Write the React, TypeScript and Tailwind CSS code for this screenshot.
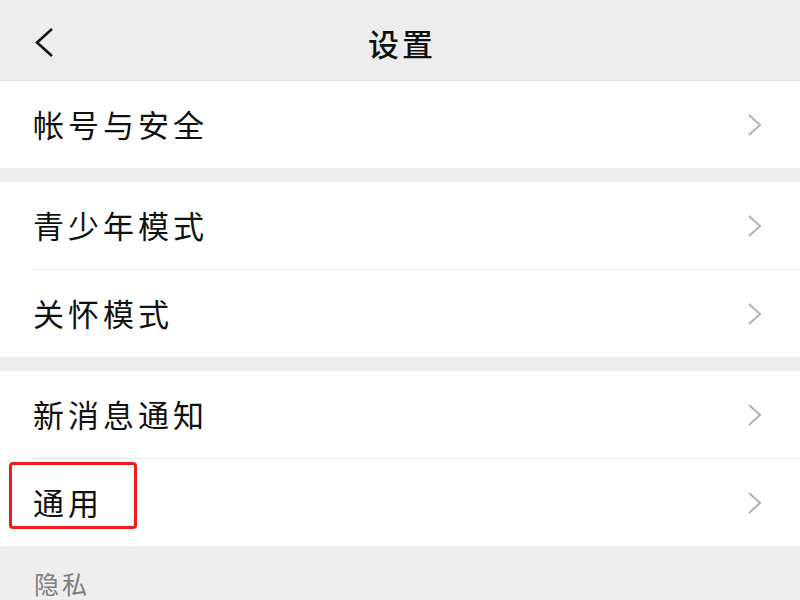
import React from 'react'

const font = { fontFamily: '"Noto Sans CJK SC", "Noto Sans", sans-serif' }

function Chevron() {
  return (
    <svg width="16" height="24" viewBox="0 0 16 24" fill="none">
      <path d="M2 2 L13 12 L2 22" stroke="#b2b2b2" strokeWidth="2" />
    </svg>
  )
}

function Row({ label, divider, marked }: { label: string; divider?: boolean; marked?: boolean }) {
  return (
    <div className="relative">
      {divider && <div className="ml-[33px] h-px bg-[#e8e8e8]" />}
      <div className="flex h-[87px] items-center justify-between pl-[33px] pr-[37px]">
        <span className="text-[31px] tracking-[4px] text-[#111]">{label}</span>
        <Chevron />
      </div>
      {marked && (
        <div className="absolute left-[9px] top-[4px] h-[67px] w-[128px] rounded-[4px] border-[3px] border-[#ee1c1c]" />
      )}
    </div>
  )
}

function Gap() {
  return <div className="h-[14px] shrink-0 bg-[#ededed]" />
}

export default function App() {
  return (
    <div className="flex h-[600px] w-[800px] flex-col overflow-hidden bg-[#ededed]" style={font}>
      {/* header */}
      <div className="grid h-[81px] shrink-0 grid-cols-[1fr_auto_1fr] items-center border-b border-[#e3e3e3] bg-[#ededed] pt-[6px]">
        <div className="pl-[33px]">
          <svg width="22" height="30" viewBox="0 0 22 30" fill="none">
            <path d="M19 1 L4 14.5 L19 28" stroke="#111" strokeWidth="2.6" />
          </svg>
        </div>
        <span className="pl-[4px] text-[31px] font-medium tracking-[3px] text-[#111]">设置</span>
        <div />
      </div>

      <div className="shrink-0 bg-white">
        <Row label="帐号与安全" />
      </div>
      <Gap />
      <div className="shrink-0 bg-white">
        <Row label="青少年模式" />
        <Row label="关怀模式" divider />
      </div>
      <Gap />
      <div className="shrink-0 bg-white">
        <Row label="新消息通知" />
        <Row label="通用" divider marked />
      </div>

      <div className="min-h-0 flex-1 bg-[#ededed] pl-[34px] pt-[19px]">
        <span className="text-[25px] tracking-[3px] text-[#7f7f7f]">隐私</span>
      </div>
    </div>
  )
}
